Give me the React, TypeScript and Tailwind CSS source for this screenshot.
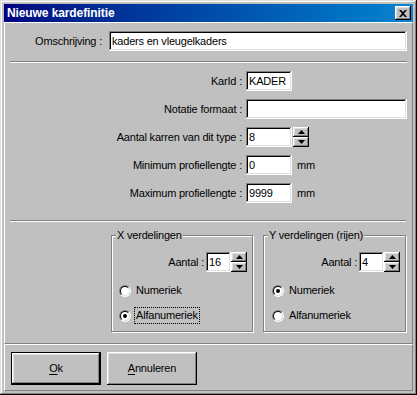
import React from "react";

const raised =
  "shadow-[inset_-1px_-1px_#000000,inset_1px_1px_#ffffff,inset_-2px_-2px_#808080,inset_2px_2px_#dfdfdf]";
const sunken =
  "shadow-[inset_-1px_-1px_#ffffff,inset_1px_1px_#808080,inset_-2px_-2px_#dfdfdf,inset_2px_2px_#000000]";

const Field = ({ value = "", w }: { value?: string; w: string }) => (
  <div className={`${w} h-[20px] shrink-0 bg-white ${sunken} pl-[3px] leading-[20px] whitespace-nowrap`}>
    {value}
  </div>
);

const Arrow = ({ up }: { up?: boolean }) => (
  <svg width="7" height="4" viewBox="0 0 7 4" className="block">
    <polygon points={up ? "3.5,0 7,4 0,4" : "0,0 7,0 3.5,4"} fill="#000" />
  </svg>
);

const Spinner = ({ gap = "" }: { gap?: string }) => (
  <div className={`flex flex-col w-[16px] h-[20px] shrink-0 ${gap}`}>
    <div className={`h-[10px] flex items-center justify-center bg-[#c0c0c0] ${raised}`}>
      <Arrow up />
    </div>
    <div className={`h-[10px] flex items-center justify-center bg-[#c0c0c0] ${raised}`}>
      <Arrow />
    </div>
  </div>
);

const Radio = ({ checked = false }: { checked?: boolean }) => (
  <span className="flex w-[12px] h-[12px] shrink-0 rounded-full border border-t-[#808080] border-l-[#808080] border-b-white border-r-white">
    <span className="flex w-full h-full items-center justify-center rounded-full bg-white border border-t-black border-l-black border-b-[#dfdfdf] border-r-[#dfdfdf]">
      {checked && <span className="w-[4px] h-[4px] rounded-full bg-black" />}
    </span>
  </span>
);

const Row = ({ label, children }: { label: string; children: React.ReactNode }) => (
  <div className="flex items-center h-[20px]">
    <div className="w-[237px] text-right whitespace-nowrap">{label}</div>
    <div className="ml-[4px] flex items-center">{children}</div>
  </div>
);

const Group = ({
  title,
  w,
  pl,
  aantal,
  checked,
  focus,
}: {
  title: string;
  w: string;
  pl: string;
  aantal: string;
  checked: number;
  focus?: number;
}) => (
  <div className={`${w} h-[97px] flex flex-col border border-[#808080] shadow-[inset_1px_1px_#ffffff,1px_1px_#ffffff]`}>
    <span className="self-start -mt-[7px] ml-[4px] px-[1px] bg-[#c0c0c0] leading-[13px] whitespace-nowrap">
      {title}
    </span>
    <div className="mt-[10px] flex items-center justify-end pr-[5px]">
      <span className="whitespace-nowrap">Aantal :</span>
      <Field value={aantal} w="w-[25px] ml-[2px]" />
      <Spinner />
    </div>
    <div className={`mt-[10px] flex flex-col gap-[8px] ${pl}`}>
      {["Numeriek", "Alfanumeriek"].map((t, i) => (
        <div key={t} className="flex items-center h-[17px]">
          <Radio checked={checked === i} />
          <span
            className={`ml-[3px] px-[1px] leading-[15px] border border-dotted ${
              focus === i ? "border-black" : "border-transparent"
            }`}
          >
            {t}
          </span>
        </div>
      ))}
    </div>
  </div>
);

const Btn = ({ first, rest, isDefault }: { first: string; rest: string; isDefault?: boolean }) => (
  <div className={`w-[90px] h-[33px] ${isDefault ? "border border-black" : ""}`}>
    <div className={`w-full h-full flex items-center justify-center bg-[#c0c0c0] ${raised}`}>
      <span>
        <span className="underline underline-offset-[2px]">{first}</span>
        {rest}
      </span>
    </div>
  </div>
);

export default function App() {
  return (
    <div className="w-[417px] h-[395px] bg-[#c0c0c0] p-[4px] flex flex-col text-[11px] tracking-[-0.2px] text-black font-['Liberation_Sans',Arial,sans-serif] shadow-[inset_-1px_-1px_#000000,inset_1px_1px_#dfdfdf,inset_-2px_-2px_#808080,inset_2px_2px_#ffffff]">
      {/* title bar */}
      <div className="h-[18px] shrink-0 flex items-center justify-between pl-[3px] pr-[2px] bg-linear-to-r from-[#000080] to-[#1084d0]">
        <span className="text-white font-bold text-[12px] tracking-[-0.1px]">Nieuwe kardefinitie</span>
        <div className={`w-[16px] h-[14px] flex items-center justify-center bg-[#c0c0c0] ${raised}`}>
          <svg width="8" height="7" viewBox="0 0 8 7" className="block">
            <path d="M0 0h2l2 2 2-2h2L5 3.5 8 7H6L4 5 2 7H0l3-3.5z" fill="#000" />
          </svg>
        </div>
      </div>

      {/* form panel */}
      <div className="h-[322px] shrink-0 flex flex-col border border-t-white border-l-white border-b-[#808080] border-r-[#808080]">
        <div className="mt-[8px] flex items-center">
          <div className="w-[97px] text-right whitespace-nowrap">Omschrijving :</div>
          <Field value="kaders en vleugelkaders" w="w-[298px] ml-[7px]" />
        </div>

        <div className="mt-[10px] ml-[5px] w-[397px] h-[2px] border-t border-t-[#808080] border-b border-b-white" />

        <div className="mt-[8px] flex flex-col gap-[8px]">
          <Row label="KarId :">
            <Field value="KADER" w="w-[46px]" />
          </Row>
          <Row label="Notatie formaat :">
            <Field w="w-[161px]" />
          </Row>
          <Row label="Aantal karren van dit type :">
            <Field value="8" w="w-[46px]" />
            <Spinner gap="ml-[1px]" />
          </Row>
          <Row label="Minimum profiellengte :">
            <Field value="0" w="w-[46px]" />
            <span className="ml-[5px]">mm</span>
          </Row>
          <Row label="Maximum profiellengte :">
            <Field value="9999" w="w-[46px]" />
            <span className="ml-[5px]">mm</span>
          </Row>
        </div>

        <div className="mt-[17px] ml-[5px] w-[396px] h-[2px] border-t border-t-[#808080] border-b border-b-white" />

        <div className="mt-[13px] ml-[106px] flex gap-[10px]">
          <Group title="X verdelingen" w="w-[142px]" pl="pl-[7px]" aantal="16" checked={1} focus={1} />
          <Group title="Y verdelingen (rijen)" w="w-[143px]" pl="pl-[8px]" aantal="4" checked={0} />
        </div>
      </div>

      {/* button panel */}
      <div className="flex-1 flex items-start gap-[6px] pt-[7px] pl-[6px] border border-t-white border-l-white border-b-[#808080] border-r-[#808080]">
        <Btn first="O" rest="k" isDefault />
        <Btn first="A" rest="nnuleren" />
      </div>
    </div>
  );
}
